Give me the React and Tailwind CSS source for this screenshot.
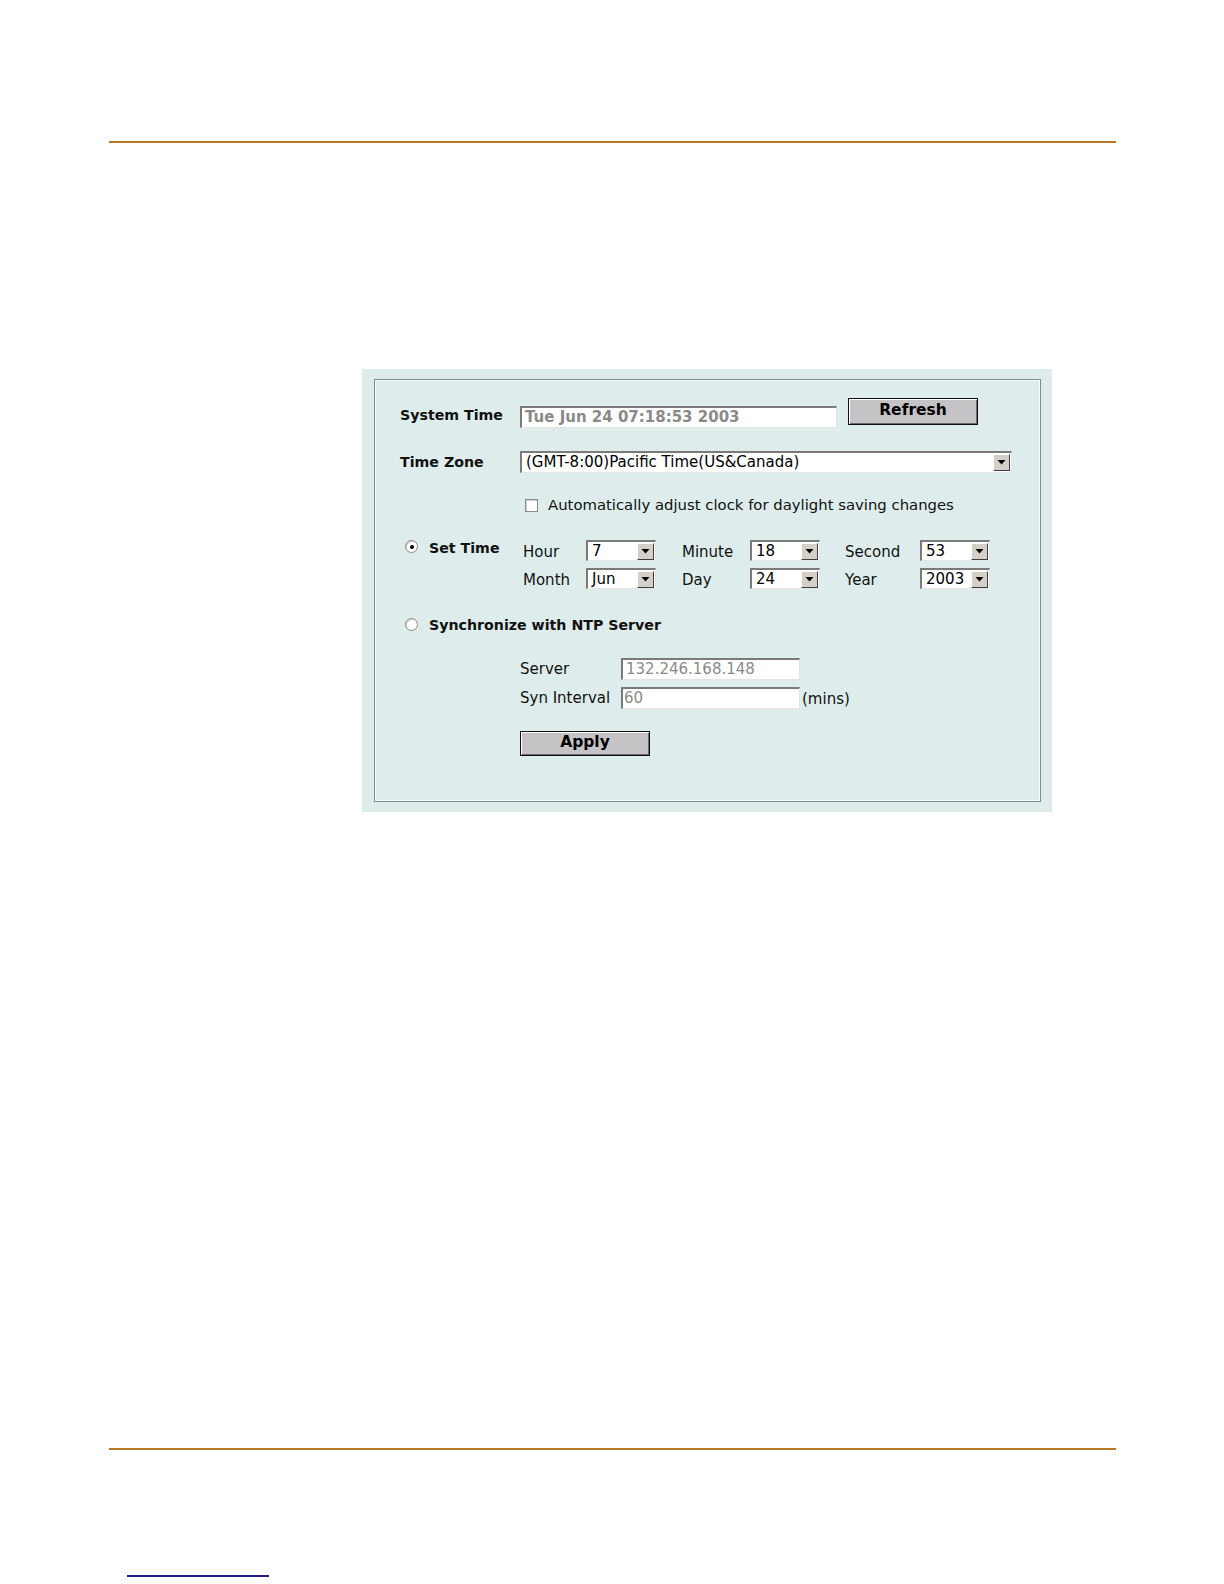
import React from "react";

const font = { fontFamily: '"DejaVu Sans", Verdana, sans-serif' };

function Arrow() {
  return (
    <div className="w-[17px] h-[17px] bg-[#d4d0c8] border-t border-l border-t-white border-l-white border-b border-r border-b-[#404040] border-r-[#404040] flex items-center justify-center shrink-0">
      <svg width="9" height="5" viewBox="0 0 9 5"><path d="M0.5 0h8L4.5 4.5z" fill="#000" /></svg>
    </div>
  );
}

function Select({ value, w, h = 21 }) {
  return (
    <div
      className="bg-white border-t-2 border-l-2 border-t-[#7a7a7a] border-l-[#7a7a7a] border-b border-r border-b-[#e4e4e4] border-r-[#e4e4e4] flex items-center justify-between pl-[4px] pr-[1px] text-[15px] text-black"
      style={{ width: w, height: h }}
    >
      <span className="leading-none">{value}</span>
      <Arrow />
    </div>
  );
}

function Input({ value, w, h = 22, cls = "" }) {
  return (
    <div
      className={"bg-white border-t-2 border-l-2 border-t-[#7a7a7a] border-l-[#7a7a7a] border-b border-r border-b-[#e4e4e4] border-r-[#e4e4e4] flex items-center text-[#8a8a8a] " + cls}
      style={{ width: w, height: h }}
    >
      <span className="leading-none">{value}</span>
    </div>
  );
}

function Button({ label, w, h }) {
  return (
    <div
      className="bg-[#c6c3c6] border border-[#111] shadow-[inset_1px_1px_0_#ffffff,inset_-1px_-1px_0_#6a6a6a] flex items-center justify-center font-bold text-[15.5px] text-black"
      style={{ width: w, height: h }}
    >
      <span className="leading-none -mt-[2px]">{label}</span>
    </div>
  );
}

function Radio({ checked }) {
  return (
    <div className="w-[13px] h-[13px] rounded-full bg-white border border-[#8a8a8a] shadow-[inset_1px_1px_0_#cfcfcf] flex items-center justify-center shrink-0">
      {checked && <div className="w-[4px] h-[4px] rounded-full bg-black" />}
    </div>
  );
}

export default function App() {
  return (
    <div className="w-[1224px] h-[1584px] bg-white pt-[141px]" style={font}>
      <div className="ml-[109px] w-[1007px] h-[2px] bg-[#b87828]" />

      <div className="ml-[362px] mt-[226px] w-[690px] h-[443px] bg-[#deedeb] pt-[10px] pl-[12px]">
        <div className="w-[667px] h-[423px] border border-[#7f8c8c] shadow-[inset_1px_1px_0_#f6fbfb,inset_-1px_-1px_0_#f6fbfb] text-[15px] text-[#111]">
          {/* System time */}
          <div className="mt-[18px] h-[30px] flex items-start">
            <div className="ml-[25px] w-[120px] mt-[8px] font-bold text-[14.2px] leading-[18px]">System Time</div>
            <Input value="Tue Jun 24 07:18:53 2003" w={317} cls="mt-[8px] font-bold text-[15px] pl-[3px]" />
            <div className="ml-[11px]">
              <Button label="Refresh" w={130} h={27} />
            </div>
          </div>

          {/* Time zone */}
          <div className="mt-[23px] h-[22px] flex items-center">
            <div className="ml-[25px] w-[120px] font-bold text-[14.2px] leading-[18px]">Time Zone</div>
            <Select value="(GMT-8:00)Pacific Time(US&Canada)" w={492} h={22} />
          </div>

          {/* Daylight */}
          <div className="mt-[22px] h-[20px] flex items-center">
            <div className="ml-[150px] w-[13px] h-[13px] bg-white border border-[#8a8a8a] shadow-[inset_1px_1px_0_#d0d0d0]" />
            <div className="ml-[10px] leading-[18px] text-[14.85px]">Automatically adjust clock for daylight saving changes</div>
          </div>

          {/* Set time */}
          <div className="mt-[25px] flex items-start">
            <div className="ml-[30px] w-[118px] flex items-center h-[13px] gap-[11px]">
              <Radio checked />
              <span className="font-bold text-[14.2px] leading-[18px] mt-[3px]">Set Time</span>
            </div>
            <div className="flex flex-col gap-[7px]">
              {[
                ["Hour", "7", "Minute", "18", "Second", "53"],
                ["Month", "Jun", "Day", "24", "Year", "2003"],
              ].map((r) => (
                <div key={r[0]} className="flex items-center h-[21px]">
                  <div className="w-[63px] leading-[18px] mt-[2px]">{r[0]}</div>
                  <Select value={r[1]} w={70} />
                  <div className="ml-[26px] w-[68px] leading-[18px] mt-[2px]">{r[2]}</div>
                  <Select value={r[3]} w={70} />
                  <div className="ml-[25px] w-[75px] leading-[18px] mt-[2px]">{r[4]}</div>
                  <Select value={r[5]} w={70} />
                </div>
              ))}
            </div>
          </div>

          {/* NTP */}
          <div className="mt-[26px] h-[18px] flex items-center">
            <div className="ml-[30px] flex items-center gap-[11px]">
              <Radio />
              <span className="font-bold text-[14.2px] leading-[18px] mt-[2px]">Synchronize with NTP Server</span>
            </div>
          </div>

          <div className="mt-[25px] flex flex-col gap-[7px]">
            <div className="flex items-center h-[22px]">
              <div className="ml-[145px] w-[101px] leading-[18px]">Server</div>
              <Input value="132.246.168.148" w={179} cls="text-[15px] pl-[3px]" />
            </div>
            <div className="flex items-center h-[22px]">
              <div className="ml-[145px] w-[101px] leading-[18px]">Syn Interval</div>
              <Input value="60" w={179} cls="text-[15px] pl-[1px]" />
              <div className="ml-[2px] leading-[18px] mt-[2px]">(mins)</div>
            </div>
          </div>

          <div className="mt-[22px] ml-[145px]">
            <Button label="Apply" w={130} h={25} />
          </div>
        </div>
      </div>

      <div className="ml-[109px] mt-[636px] w-[1007px] h-[2px] bg-[#b87828]" />
      <div className="ml-[127px] mt-[125px] w-[142px] h-[2px] bg-[#1c1c8a]" />
    </div>
  );
}
